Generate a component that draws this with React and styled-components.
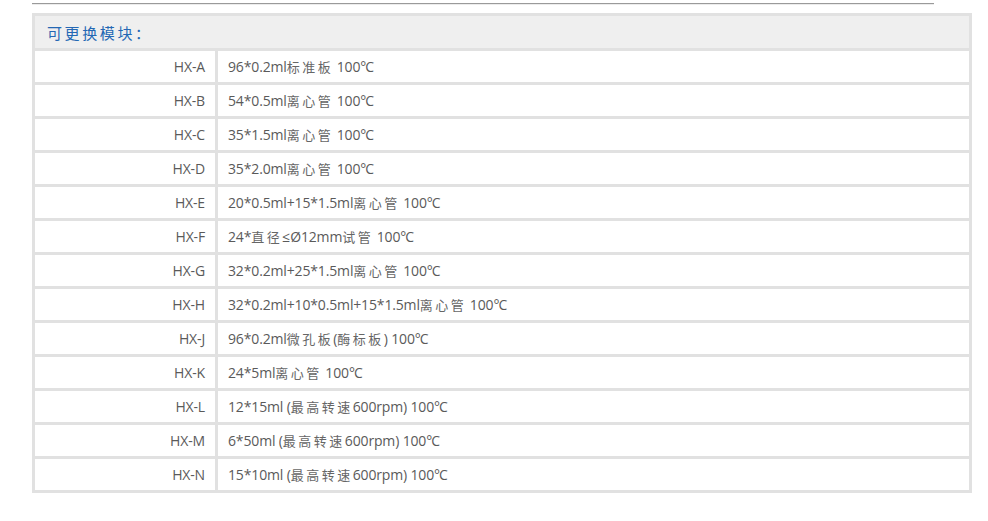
import React from "react";
import styled, { createGlobalStyle } from "styled-components";

const Global = createGlobalStyle`
  html, body { margin: 0; padding: 0; background: #fff; }
  body { font-family: "Open Sans", "Noto Sans CJK SC", sans-serif; }
`;

const Page = styled.div`
  padding: 3px 0 0 32px;
`;

const Rule = styled.div`
  width: 902px;
  height: 0;
  border-top: 1px solid #9a9a9a;
  border-bottom: 1px solid #ececec;
`;

const Table = styled.div`
  margin-top: 8px;
  width: 940px;
  box-sizing: border-box;
  display: grid;
  grid-template-columns: 180px 1fr;
  gap: 3px;
  padding: 3px;
  background: #e1e1e1;
`;

const Header = styled.div`
  grid-column: 1 / -1;
  height: 32px;
  background: #efefef;
  display: flex;
  align-items: center;
  padding-left: 12px;
  color: #2468b4;
  font-size: 15px;
  letter-spacing: 2.6px;
  font-family: "Noto Sans CJK SC", sans-serif;
`;

const Cell = styled.div`
  height: 31px;
  background: #fff;
  display: flex;
  align-items: center;
  justify-content: ${(p) => (p.$label ? "flex-end" : "flex-start")};
  padding: ${(p) => (p.$label ? "0 10px 0 0" : "0 0 0 10px")};
  color: #5a5a5a;
  font-size: 14px;
  letter-spacing: -0.15px;
  white-space: pre;
`;

const Han = styled.span`
  font-family: "Noto Sans CJK SC", sans-serif;
  font-size: 13px;
  letter-spacing: 2.5px;
  color: #666;
`;

const Deg = styled.span`
  letter-spacing: -2px;
  margin-right: 1px;
`;

const rows = [
  ["HX-A", "96*0.2ml标准板 100°C"],
  ["HX-B", "54*0.5ml离心管 100°C"],
  ["HX-C", "35*1.5ml离心管 100°C"],
  ["HX-D", "35*2.0ml离心管 100°C"],
  ["HX-E", "20*0.5ml+15*1.5ml离心管 100°C"],
  ["HX-F", "24*直径≤Ø12mm试管 100°C"],
  ["HX-G", "32*0.2ml+25*1.5ml离心管 100°C"],
  ["HX-H", "32*0.2ml+10*0.5ml+15*1.5ml离心管 100°C"],
  ["HX-J", "96*0.2ml微孔板(酶标板) 100°C"],
  ["HX-K", "24*5ml离心管 100°C"],
  ["HX-L", "12*15ml (最高转速600rpm) 100°C"],
  ["HX-M", "6*50ml (最高转速600rpm) 100°C"],
  ["HX-N", "15*10ml (最高转速600rpm) 100°C"],
];

function renderText(text) {
  const parts = text.split(/([\u4e00-\u9fff]+|°)/).filter(Boolean);
  return parts.map((p, i) => {
    if (p === "°") return <Deg key={i}>°</Deg>;
    if (/[\u4e00-\u9fff]/.test(p)) return <Han key={i}>{p}</Han>;
    return <React.Fragment key={i}>{p}</React.Fragment>;
  });
}

export default function App() {
  return (
    <Page>
      <Global />
      <Rule />
      <Table>
        <Header>可更换模块：</Header>
        {rows.map(([k, v]) => (
          <React.Fragment key={k}>
            <Cell $label>{k}</Cell>
            <Cell>{renderText(v)}</Cell>
          </React.Fragment>
        ))}
      </Table>
    </Page>
  );
}
